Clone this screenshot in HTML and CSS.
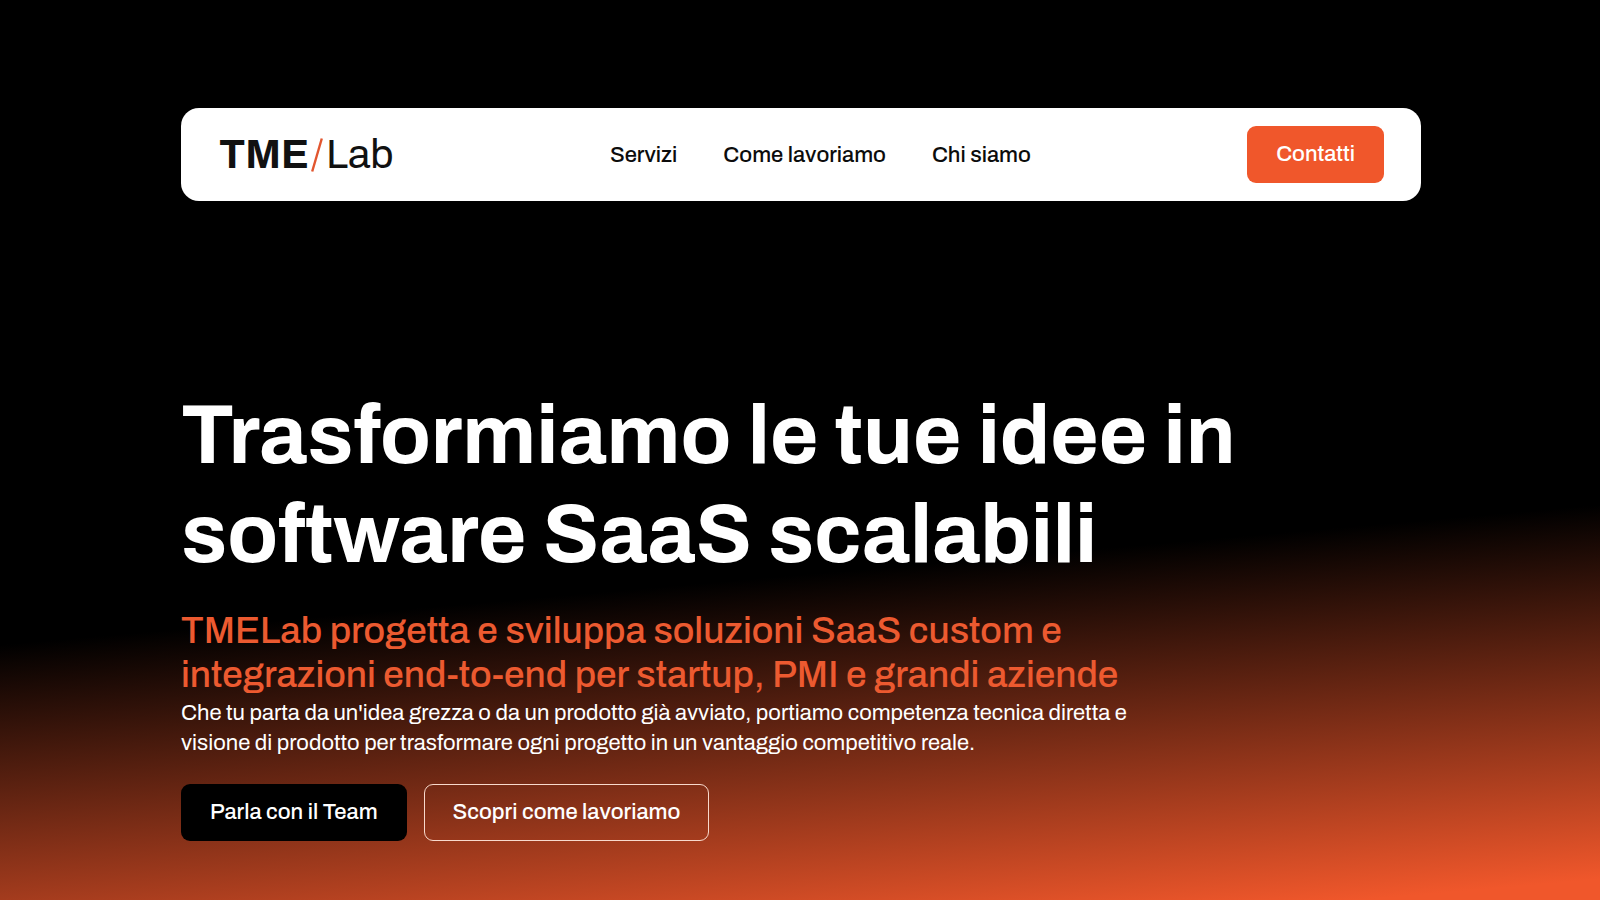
FILE: index.html
```html
<!DOCTYPE html>
<html lang="it">
<head>
<meta charset="utf-8">
<meta name="viewport" content="width=device-width, initial-scale=1">
<title>TMELab</title>
<link rel="stylesheet" href="styles.css">
</head>
<body>
<div class="page">
  <header class="navbar">
    <a class="logo" href="#" aria-label="TME/Lab">
      <span class="logo-bold">TME</span>
      <svg class="logo-slash" viewBox="0 0 12 34" aria-hidden="true"><path d="M1.2 33.5 10.8 .5" stroke="#e2562f" stroke-width="2.4" fill="none"/></svg>
      <span class="logo-light">Lab</span>
    </a>
    <nav class="links">
      <a href="#servizi">Servizi</a>
      <a href="#lavoriamo">Come lavoriamo</a>
      <a href="#chi-siamo">Chi siamo</a>
    </nav>
    <a class="btn btn-accent" href="#contatti">Contatti</a>
  </header>
  <main class="hero">
    <h1>Trasformiamo le tue idee in software SaaS scalabili</h1>
    <h2>TMELab progetta e sviluppa soluzioni SaaS custom e integrazioni end-to-end per startup, PMI e grandi aziende</h2>
    <p>Che tu parta da un'idea grezza o da un prodotto già avviato, portiamo competenza tecnica diretta e visione di prodotto per trasformare ogni progetto in un vantaggio competitivo reale.</p>
    <div class="actions">
      <a class="btn btn-dark" href="#contatti">Parla con il Team</a>
      <a class="btn btn-outline" href="#lavoriamo">Scopri come lavoriamo</a>
    </div>
  </main>
</div>
</body>
</html>
```
FILE: styles.css
```css
* { box-sizing: border-box; }

body {
  margin: 0;
  font-family: Archivo, "Liberation Sans", Arial, sans-serif;
  color: #fff;
  background: #000;
}

a { color: inherit; text-decoration: none; }

.page {
  min-height: 100vh;
  padding: 108px 179px 59px 181px;
  display: flex;
  flex-direction: column;
  justify-content: space-between;
  background: linear-gradient(175deg, #000 62%, #f0572b 98%);
}

.navbar {
  display: flex;
  justify-content: space-between;
  align-items: center;
  padding: 18px 37px 18px 38px;
  background: #fff;
  color: #0c0c0c;
  border-radius: 18px;
}

.logo {
  display: flex;
  align-items: center;
  font-size: 41px;
  line-height: 48px;
  color: #111;
}

.logo-bold { font-weight: 700; }

.logo-slash {
  width: 12px;
  height: 34px;
  margin: 0 3px 0 2px;
}

.links {
  display: flex;
  gap: 46px;
  font-size: 22px;
  line-height: 30px;
  font-weight: 500;
}

.btn {
  display: inline-block;
  padding: 13px 28px;
  border: 1px solid transparent;
  border-radius: 9px;
  font-size: 22px;
  line-height: 29px;
  font-weight: 500;
  text-align: center;
}

.btn-accent {
  background: #f0572b;
  color: #fff;
}

.btn-dark { background: #000; }

.btn-outline { border-color: #f8d9cc; }

h1 {
  margin: 0 0 25px;
  max-width: 1100px;
  font-size: 83px;
  line-height: 99px;
  font-weight: 700;
}

h2 {
  margin: 0 0 1px;
  max-width: 960px;
  font-size: 37px;
  line-height: 44px;
  font-weight: 500;
  color: #ec5a30;
}

p {
  margin: 0 0 26px;
  max-width: 960px;
  font-size: 22px;
  line-height: 30px;
}

.actions {
  display: flex;
  flex-wrap: wrap;
  gap: 17px;
}
```
